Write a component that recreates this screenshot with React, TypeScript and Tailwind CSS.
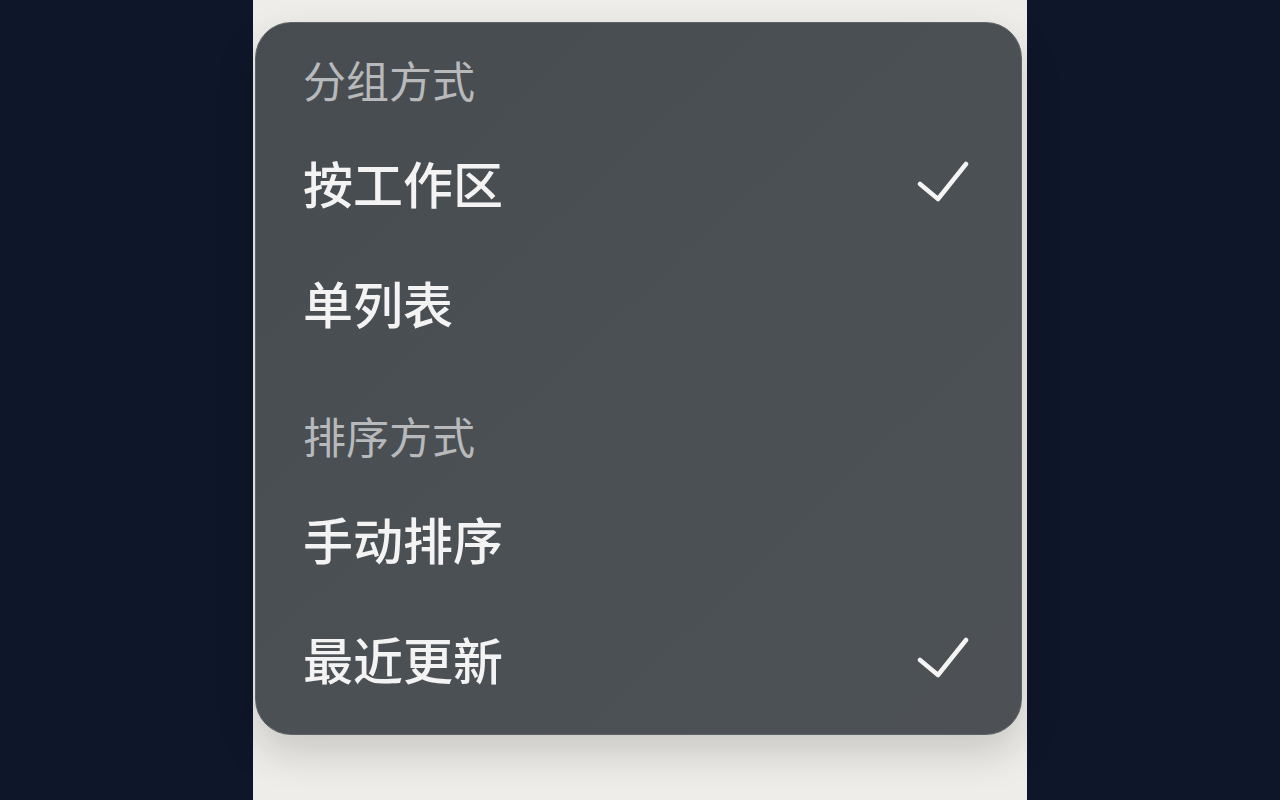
import { Fragment } from "react";

type MenuItem = { label: string; checked: boolean };
type MenuSection = { title: string; items: MenuItem[] };

const sections: MenuSection[] = [
  {
    title: "分组方式",
    items: [
      { label: "按工作区", checked: true },
      { label: "单列表", checked: false },
    ],
  },
  {
    title: "排序方式",
    items: [
      { label: "手动排序", checked: false },
      { label: "最近更新", checked: true },
    ],
  },
];

function CheckIcon() {
  return (
    <svg width="52" height="44" viewBox="0 0 52 44" fill="none" aria-hidden>
      <path
        d="M3 24 L21 39 L49 4"
        stroke="#f5f5f5"
        strokeWidth="4.5"
        strokeLinecap="round"
        strokeLinejoin="round"
      />
    </svg>
  );
}

export default function App() {
  return (
    <div className="min-h-screen w-full bg-[#0e1629] font-['Noto_Sans_CJK_SC','Noto_Sans',sans-serif]">
      <div className="mx-auto h-screen w-[774px] bg-[#eeede9] pt-[22px]">
        <div
          className="ml-[2px] flex h-[713px] w-[767px] flex-col rounded-[36px] border border-[#5f6469] bg-gradient-to-br from-[#474c51] via-[#4b5055] to-[#4d5156] pb-[18px] pl-[47px] pr-[52px] pt-[13px] shadow-[0_18px_40px_rgba(0,0,0,0.16)]"
          role="menu"
        >
          {sections.map((section, index) => (
            <Fragment key={section.title}>
              {index > 0 && <div className="h-[30px] shrink-0" />}
              <div className="flex h-[86px] shrink-0 items-center">
                <span className="text-[43px] leading-none text-[#b7b9bb]">
                  {section.title}
                </span>
              </div>
              {section.items.map((item) => (
                <div
                  key={item.label}
                  role="menuitemcheckbox"
                  aria-checked={item.checked}
                  className="flex h-[120px] shrink-0 items-center justify-between"
                >
                  <span className="text-[50px] font-medium leading-none text-[#f3f3f3]">
                    {item.label}
                  </span>
                  {item.checked && <CheckIcon />}
                </div>
              ))}
            </Fragment>
          ))}
        </div>
      </div>
    </div>
  );
}
